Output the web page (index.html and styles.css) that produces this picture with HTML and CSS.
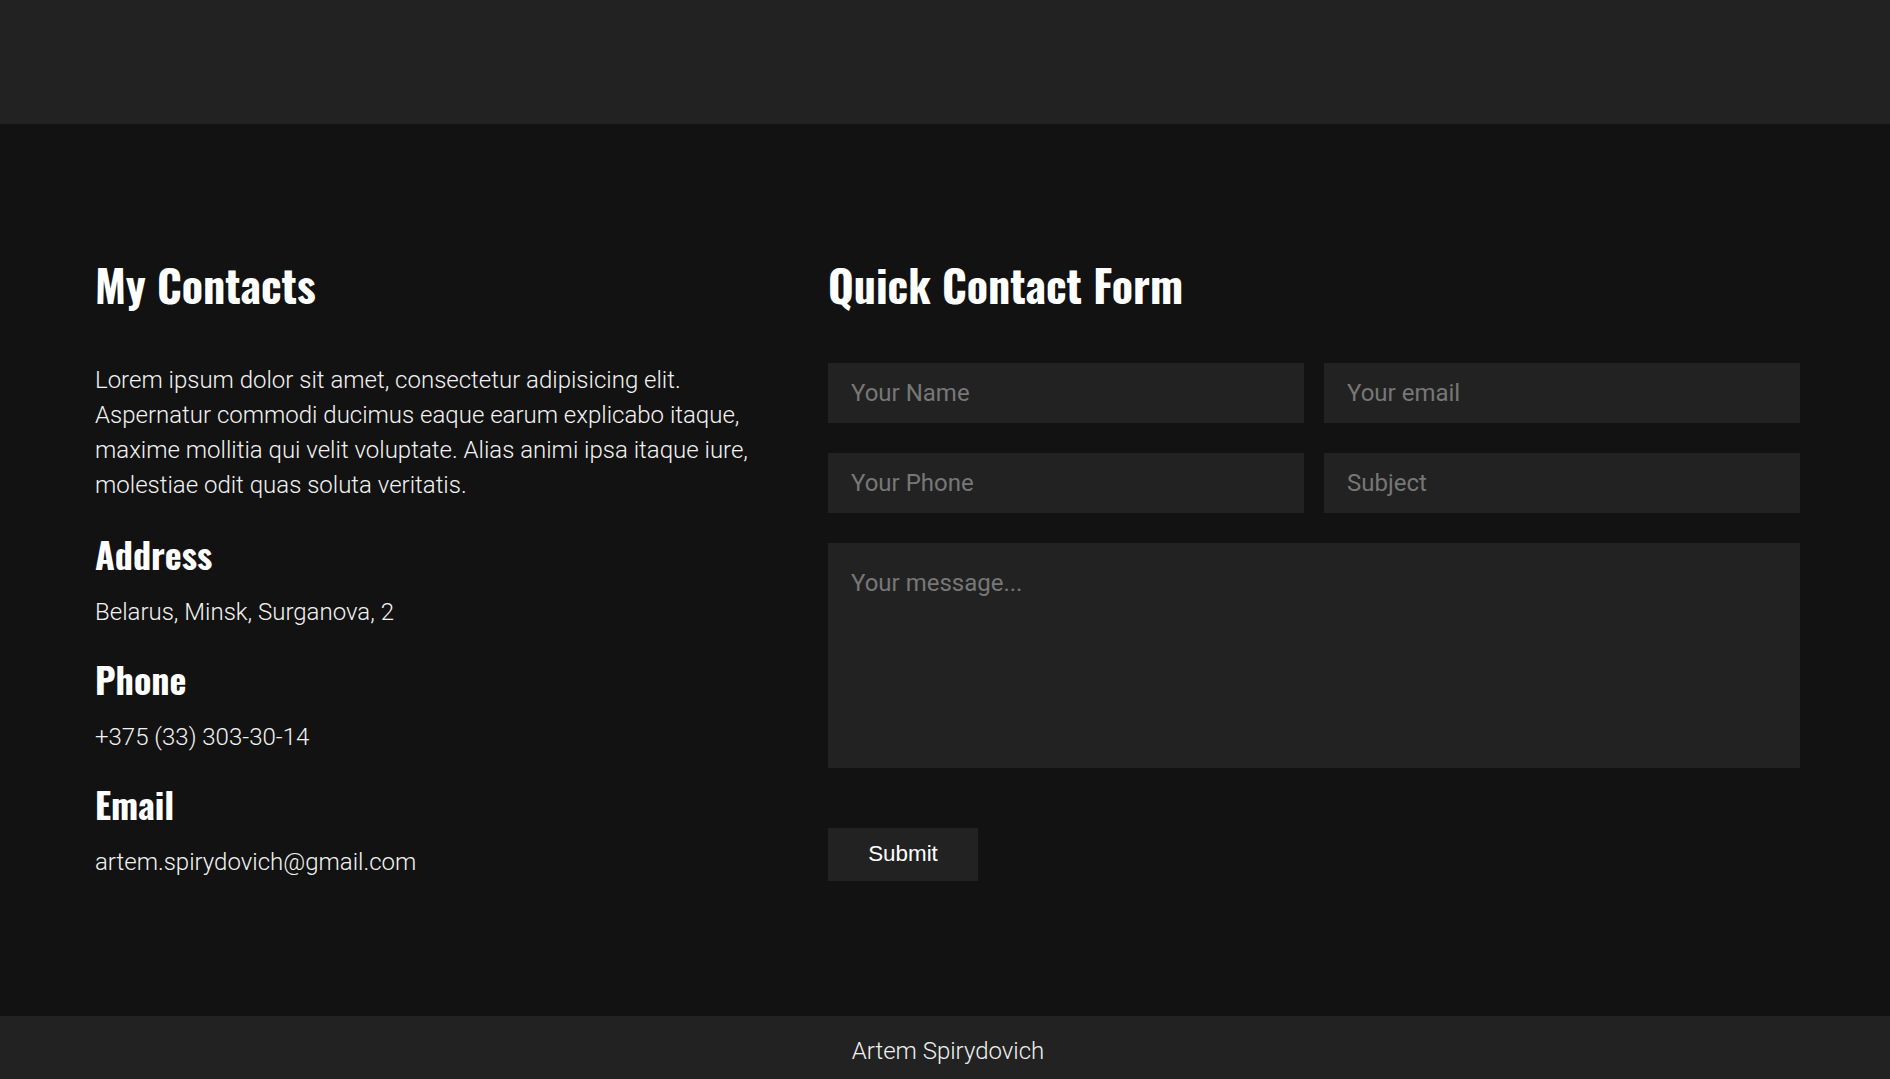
FILE: index.html
```html
<!DOCTYPE html>
<html lang="en">
<head>
<meta charset="utf-8">
<title>Contacts</title>
<link rel="stylesheet" href="styles.css">
</head>
<body>
<header class="site-header"></header>
<main class="contact">
  <section class="contact-info">
    <h2 class="title">My Contacts</h2>
    <p class="intro">Lorem ipsum dolor sit amet, consectetur adipisicing elit. Aspernatur commodi ducimus eaque earum explicabo itaque, maxime mollitia qui velit voluptate. Alias animi ipsa itaque iure, molestiae odit quas soluta veritatis.</p>
    <h3 class="info-title">Address</h3>
    <p class="info-text">Belarus, Minsk, Surganova, 2</p>
    <h3 class="info-title">Phone</h3>
    <p class="info-text">+375 (33) 303-30-14</p>
    <h3 class="info-title">Email</h3>
    <p class="info-text">artem.spirydovich@gmail.com</p>
  </section>
  <section class="contact-form-wrap">
    <h2 class="title">Quick Contact Form</h2>
    <form class="contact-form">
      <div class="form-grid">
        <input class="field" type="text" placeholder="Your Name">
        <input class="field" type="email" placeholder="Your email">
        <input class="field" type="text" placeholder="Your Phone">
        <input class="field" type="text" placeholder="Subject">
      </div>
      <textarea class="field field-message" placeholder="Your message..."></textarea>
      <button class="submit" type="button">Submit</button>
    </form>
  </section>
</main>
<footer class="site-footer">Artem Spirydovich</footer>
</body>
</html>
```

FILE: styles.css
```css
* {
  box-sizing: border-box;
}

body {
  margin: 0;
  min-height: 100vh;
  display: flex;
  flex-direction: column;
  background: #121212;
  color: #f2f2f2;
  font-family: Roboto, "Liberation Sans", sans-serif;
  font-weight: 300;
}

.site-header {
  height: 124px;
  background: #222222;
  flex: none;
}

.contact {
  flex: 1;
  display: grid;
  grid-template-columns: 673px 972px;
  column-gap: 60px;
  padding: 135px 90px 0 95px;
  align-items: start;
}

.title {
  margin: 0 0 51px;
  font-family: "Oswald", "Roboto Condensed", "Liberation Sans Narrow", "DejaVu Sans Condensed", sans-serif;
  font-weight: 700;
  font-size: 44px;
  line-height: 1.2;
  color: #ffffff;
}

.intro {
  margin: 0 0 29px;
  font-size: 24px;
  line-height: 35px;
}

.info-title {
  margin: 27px 0 19px;
  font-family: "Oswald", "Roboto Condensed", "Liberation Sans Narrow", "DejaVu Sans Condensed", sans-serif;
  font-weight: 700;
  font-size: 36px;
  line-height: 1.2;
  color: #ffffff;
}

.info-text {
  margin: 0;
  font-size: 24px;
  line-height: 1.5;
}

.contact-form {
  display: flex;
  flex-direction: column;
  align-items: flex-start;
}

.form-grid {
  width: 100%;
  display: grid;
  grid-template-columns: 1fr 1fr;
  column-gap: 20px;
  row-gap: 30px;
}

.field {
  width: 100%;
  height: 60px;
  padding: 0 23px;
  border: none;
  outline: none;
  background: #222222;
  color: #ffffff;
  font-family: Roboto, "Liberation Sans", sans-serif;
  font-weight: 400;
  font-size: 24px;
}

.field::placeholder {
  color: #777777;
}

.field-message {
  margin-top: 30px;
  height: 225px;
  padding: 22px 23px;
  line-height: 1.5;
  resize: none;
  display: block;
}

.submit {
  margin-top: 60px;
  width: 150px;
  height: 53px;
  border: none;
  background: #222222;
  color: #ffffff;
  font-family: "Liberation Sans", Arial, sans-serif;
  font-size: 22.4px;
  padding: 0;
}

.site-footer {
  flex: none;
  height: 63px;
  padding: 17px 0 0 6px;
  background: #222222;
  color: #f0f0f0;
  text-align: center;
  font-size: 24px;
  line-height: 1.5;
}
```
